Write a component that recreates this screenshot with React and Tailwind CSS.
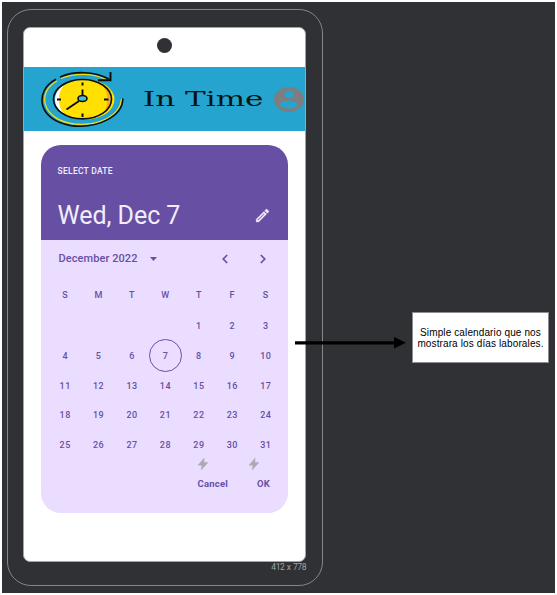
import React from "react";

const weekdays = ["S", "M", "T", "W", "T", "F", "S"];
const weeks = [
  ["", "", "", "", 1, 2, 3],
  [4, 5, 6, 7, 8, 9, 10],
  [11, 12, 13, 14, 15, 16, 17],
  [18, 19, 20, 21, 22, 23, 24],
  [25, 26, 27, 28, 29, 30, 31],
];

function ClockLogo() {
  return (
    <svg className="ml-[16px] h-[60px] w-[86px] shrink-0" viewBox="40 70 86 60" fill="none">
      <ellipse cx="85" cy="100.500" rx="29.500" ry="20" fill="#ffe000" />
      <path d="M64 86C52 93 52 108 64 114.500C57 107 57 94 64 86Z" fill="#fff" />
      <path d="M103 87C113 94 113 106 103 114.500C109 107 109 94 103 87Z" fill="#f3a81e" />
      <g stroke="#f0dc18" strokeWidth="1.300">
        <path d="M57 82C36 93 42 121 74 125C101 127.500 120 116 121.500 100" />
        <path d="M61 79.500C74 74.300 92 73.500 106 80.500" />
      </g>
      <g stroke="#0b0d0c" strokeWidth="1.600">
        <ellipse cx="82.500" cy="100.200" rx="29" ry="19.700" />
        <path d="M56 80.300C34 92 37 121 71 126.600C98 130 123 117 122.800 99.500" />
        <path d="M60 78C74 71.800 94 72 109 80" />
        <path d="M110.500 73V81.300H98" strokeWidth="1.900" />
        <path d="M82.500 83.500v3M82.500 114.500v3.500M57 100.500h4M104 100.500h4.500" strokeWidth="2" />
        <path d="M82.500 90.500v7M79 102L66.500 110.500" strokeWidth="1.900" />
        <ellipse cx="82.500" cy="99.500" rx="4.500" ry="3" fill="#48bdda" />
      </g>
    </svg>
  );
}

function Bolt() {
  return (
    <svg className="h-[12px] w-[10px]" viewBox="0 0 10 12">
      <path d="M6.200 0L0 7.200H3.900L3.200 12L10 4.500H5.900Z" fill="#a9abb0" stroke="#a9abb0" strokeWidth="0.400" />
    </svg>
  );
}

function CalendarCard() {
  return (
    <section className="ml-[16.600px] mt-[14px] h-[368px] w-[247.500px] overflow-hidden rounded-[20px] bg-[#eaddff] text-[#6750a4]">
      <header className="h-[95px] bg-[#6750a4] pl-[17px] pr-[17px] pt-[20px] text-[#f3edfb]">
        <div className="h-[12px] whitespace-nowrap text-[8.500px] font-medium leading-[12px] tracking-[0.250px]">SELECT DATE</div>
        <div className="mt-[24px] flex h-[30px] items-center justify-between">
          <span className="whitespace-nowrap text-[25px] leading-[30px] tracking-[-0.050px]">Wed, Dec 7</span>
          <svg className="-mt-[1px] h-[17px] w-[17px]" viewBox="0 0 24 24" fill="currentColor" stroke="currentColor" strokeWidth="0.400">
            <path d="M14.060 9.020l.92.92L5.920 19H5v-.92l9.060-9.060M17.660 3c-.25 0-.51.1-.7.290l-1.830 1.830 3.750 3.750 1.830-1.830c.39-.39.39-1.020 0-1.410l-2.340-2.340c-.2-.2-.45-.29-.68-.29zm-3.600 3.190L3 17.250V21h3.750L17.810 9.940l-3.750-3.750z" />
          </svg>
        </div>
      </header>
      <div className="flex h-[38px] items-center pl-[17.900px]">
        <span className="w-[92px] whitespace-nowrap text-[11px] font-medium tracking-[0.080px]">December 2022</span>
        <svg className="h-[4px] w-[7px]" viewBox="0 0 7 4"><path d="M0 0H7L3.500 4Z" fill="currentColor" /></svg>
        <svg className="ml-[65px] h-[10px] w-[6px]" viewBox="0 0 6 10" fill="none" stroke="currentColor" strokeWidth="1.700"><path d="M5.200 1L1.200 5L5.200 9" /></svg>
        <svg className="ml-[31.500px] h-[10px] w-[6px]" viewBox="0 0 6 10" fill="none" stroke="currentColor" strokeWidth="1.700"><path d="M0.800 1L4.800 5L0.800 9" /></svg>
      </div>
      <div className="ml-[7.900px] grid w-[234px] grid-cols-7 grid-rows-[36px_26px_33px_27px_32px_28px] text-[9px] font-medium tracking-[0.500px]">
        {weekdays.map((d, i) => (
          <span key={i} className="flex items-center justify-center">{d}</span>
        ))}
        {weeks.flat().map((d, i) => (
          <span key={i} className="flex items-center justify-center">
            {d === 7 ? (
              <span className="-mx-1 -mb-1 -mt-[6px] flex h-[33px] w-[33px] shrink-0 items-center justify-center rounded-full border-[1.500px] border-[#6750a4] pt-[2px]">7</span>
            ) : d}
          </span>
        ))}
      </div>
      <div className="-mt-[2px] flex pl-[157px]">
        <Bolt />
        <span className="ml-[41px] flex"><Bolt /></span>
      </div>
      <div className="mt-[8px] flex justify-between pl-[157px] pr-[18px] text-[9.500px] font-bold leading-[12px] tracking-[0.200px]">
        <span>Cancel</span>
        <span>OK</span>
      </div>
    </section>
  );
}

export default function App() {
  return (
    <main className="h-[595px] w-[557px] overflow-hidden bg-white p-[2px] font-['Roboto',sans-serif]">
      <div className="relative h-[591px] w-[553px] bg-[#303134] pl-[5px] pt-[7px]">
        <div className="h-[577px] w-[316px] rounded-[24px] border border-[#85868a] pl-[15px] pt-[17px]">
          <div className="h-[535px] w-[283px] overflow-hidden rounded-[7px] border border-[#a3a5a5] bg-white">
            <div className="flex h-[39px] justify-center pt-[9.500px]">
              <span className="h-[15px] w-[15px] rounded-full bg-[#303134]" />
            </div>
            <div className="flex h-[64px] items-center bg-[#24a4ce]">
              <ClockLogo />
              <span className="ml-[16.500px] w-[131px] shrink-0 origin-left scale-x-[1.550] whitespace-nowrap font-['DejaVu_Serif',serif] text-[20px] leading-[24px] text-[#08140f]">In Time</span>
              <svg className="h-[25px] w-[30px] shrink-0" viewBox="2 2 20 20" preserveAspectRatio="none" fill="#7c7e80">
                <path d="M12 2C6.480 2 2 6.480 2 12s4.480 10 10 10 10-4.480 10-10S17.520 2 12 2zm0 3c1.660 0 3 1.340 3 3s-1.340 3-3 3-3-1.340-3-3 1.340-3 3-3zm0 14.200c-2.500 0-4.710-1.280-6-3.220.030-1.990 4-3.080 6-3.080 1.990 0 5.970 1.090 6 3.080-1.290 1.940-3.500 3.220-6 3.220z" />
              </svg>
            </div>
            <CalendarCard />
          </div>
          <div className="w-[283px] text-right text-[8.500px] leading-[10px] tracking-[-0.450px] text-[#a2a3a6] [word-spacing:0.800px]">412 x 778</div>
        </div>
        <svg className="absolute left-[293px] top-[334px] h-[14px] w-[112px]" viewBox="0 0 112 14">
          <path d="M0 5.300H99V1L111 6.800L99 12.500V8.500H0Z" fill="#000" />
        </svg>
        <aside className="absolute left-[410px] top-[310px] flex h-[51px] w-[137px] items-center justify-center border border-[#8c8d8f] bg-white text-center font-['Liberation_Sans',sans-serif] text-[10px] leading-[11px] tracking-[0.120px] text-black">
          <p className="whitespace-nowrap">Simple calendario que nos<br />mostrara los días laborales.</p>
        </aside>
      </div>
    </main>
  );
}
